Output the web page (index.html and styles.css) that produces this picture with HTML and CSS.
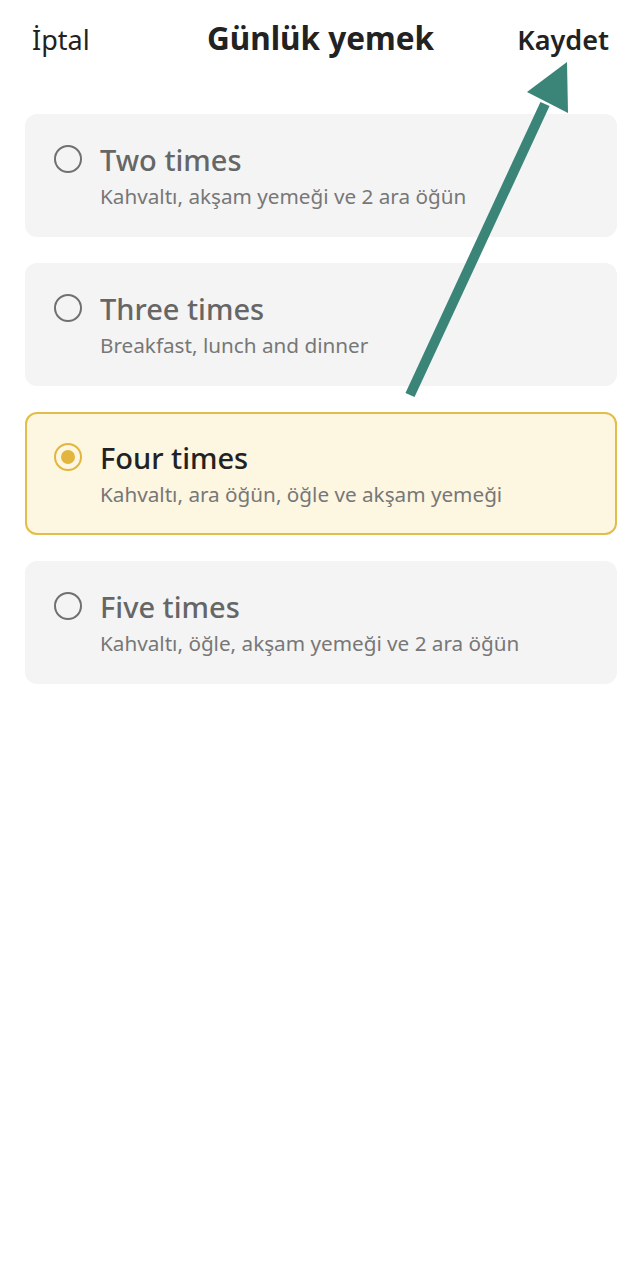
FILE: index.html
```html
<!DOCTYPE html>
<html lang="tr">
<head>
  <meta charset="UTF-8">
  <meta name="viewport" content="width=device-width, initial-scale=1.0">
  <title>Günlük yemek</title>
  <link rel="stylesheet" href="styles.css">
</head>
<body>
  <div class="page">
    <header class="topbar">
      <span class="cancel">İptal</span>
      <h1>Günlük yemek</h1>
      <span class="save">Kaydet</span>
    </header>

    <div class="options">
      <label class="option">
        <span class="radio"></span>
        <span class="text">
          <span class="title">Two times</span>
          <span class="sub">Kahvaltı, akşam yemeği ve 2 ara öğün</span>
        </span>
      </label>
      <label class="option">
        <span class="radio"></span>
        <span class="text">
          <span class="title">Three times</span>
          <span class="sub">Breakfast, lunch and dinner</span>
        </span>
      </label>
      <label class="option selected">
        <span class="radio"></span>
        <span class="text">
          <span class="title">Four times</span>
          <span class="sub">Kahvaltı, ara öğün, öğle ve akşam yemeği</span>
        </span>
      </label>
      <label class="option">
        <span class="radio"></span>
        <span class="text">
          <span class="title">Five times</span>
          <span class="sub">Kahvaltı, öğle, akşam yemeği ve 2 ara öğün</span>
        </span>
      </label>
    </div>

    <!-- annotation arrow pointing to Kaydet -->
    <svg class="arrow" width="642" height="420" viewBox="0 0 642 420">
      <line x1="410" y1="395" x2="545" y2="104" stroke="#3a8478" stroke-width="10"/>
      <polygon points="567,62 527,92 568,113" fill="#3a8478"/>
    </svg>
  </div>
</body>
</html>
```

FILE: styles.css
```css
body {
  margin: 0;
  background: #fff;
  font-family: "Noto Sans", "Open Sans", sans-serif;
}
.page {
  position: relative;
  width: 642px;
  min-height: 1280px;
}
.topbar {
  display: grid;
  grid-template-columns: 1fr auto 1fr;
  align-items: baseline;
  padding: 16px 33px 0 32px;
  height: 80px;
  box-sizing: border-box;
}
.topbar h1 {
  margin: 0;
  font-size: 31.5px;
  font-weight: 700;
  color: #222;
}
.cancel {
  font-size: 27px;
  color: #222;
}
.save {
  justify-self: end;
  font-size: 27px;
  font-weight: 600;
  color: #222;
}
.options {
  display: flex;
  flex-direction: column;
  gap: 26px;
  padding: 34px 25px 0 25px;
}
.option {
  display: flex;
  align-items: flex-start;
  gap: 18px;
  background: #f4f4f4;
  border: 2px solid #f4f4f4;
  border-radius: 12px;
  padding: 26px 20px 25px 27px;
}
.radio {
  flex: none;
  box-sizing: border-box;
  width: 28px;
  height: 28px;
  margin-top: 3px;
  border: 2.5px solid #707070;
  border-radius: 50%;
  display: flex;
  align-items: center;
  justify-content: center;
}
.text {
  display: flex;
  flex-direction: column;
}
.title {
  font-size: 29px;
  line-height: 36px;
  font-weight: 500;
  color: #666;
}
.sub {
  margin-top: 4px;
  font-size: 20.7px;
  line-height: 28px;
  color: #777;
}
.selected {
  background: #fdf6e1;
  border-color: #e2bd48;
}
.selected .radio {
  border-color: #e2b63e;
}
.selected .radio::after {
  content: "";
  width: 14px;
  height: 14px;
  border-radius: 50%;
  background: #e2b63e;
}
.selected .title {
  color: #222;
}
.arrow {
  position: absolute;
  left: 0;
  top: 0;
}
```
